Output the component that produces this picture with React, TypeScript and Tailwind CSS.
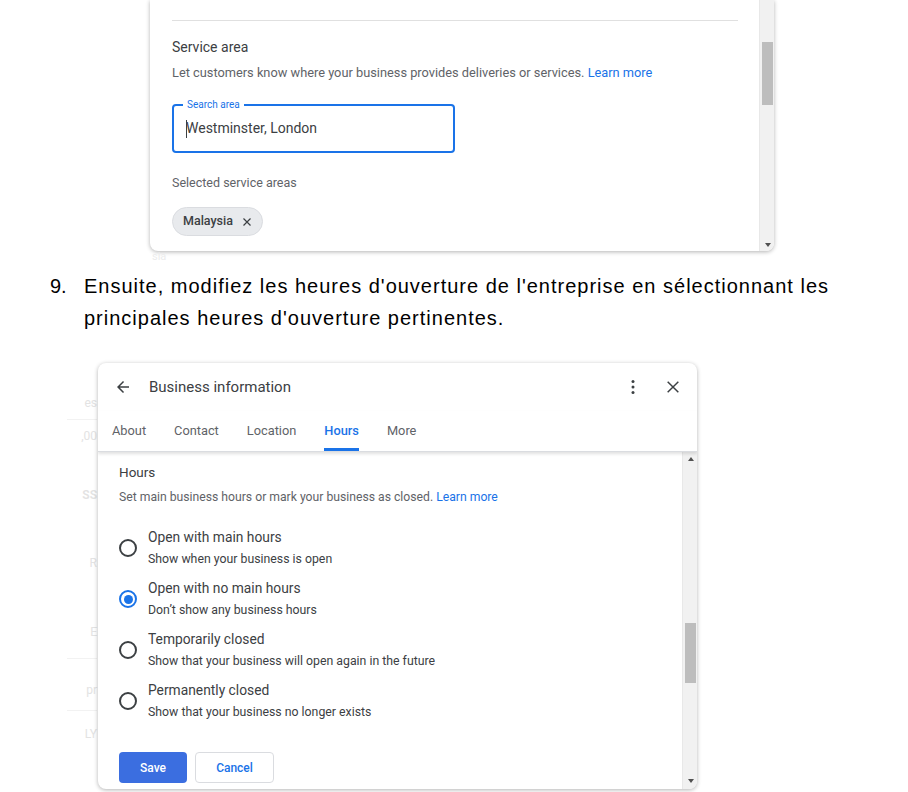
import React from "react";

const roboto = { fontFamily: "Roboto, 'Liberation Sans', sans-serif" };

type RadioOption = {
  title: string;
  subtitle: string;
  checked?: boolean;
};

const options: RadioOption[] = [
  { title: "Open with main hours", subtitle: "Show when your business is open" },
  { title: "Open with no main hours", subtitle: "Don’t show any business hours", checked: true },
  { title: "Temporarily closed", subtitle: "Show that your business will open again in the future" },
  { title: "Permanently closed", subtitle: "Show that your business no longer exists" },
];

const tabs = ["About", "Contact", "Location", "Hours", "More"];

const Scrollbar = ({ thumbTop, thumbHeight }: { thumbTop: number; thumbHeight: number }) => (
  <div className="relative w-[15px] shrink-0 bg-[#f1f1f1] border-l border-[#e8e8e8]">
    <div className="absolute left-[2px] right-[1px] bg-[#bdbdbd]" style={{ top: thumbTop, height: thumbHeight }} />
    <div className="absolute bottom-[4px] left-[5px] w-0 h-0 border-l-[3px] border-r-[3px] border-t-[4px] border-l-transparent border-r-transparent border-t-[#505050]" />
  </div>
);

const Radio = ({ checked }: { checked?: boolean }) =>
  checked ? (
    <div className="w-[18px] h-[18px] rounded-full border-2 border-[#1a73e8] flex items-center justify-center">
      <div className="w-[9px] h-[9px] rounded-full bg-[#1a73e8]" />
    </div>
  ) : (
    <div className="w-[18px] h-[18px] rounded-full border-2 border-[#3c4043]" />
  );

export default function App() {
  return (
    <div className="w-[908px] h-[792px] bg-white overflow-hidden relative">
      {/* first screenshot: service area */}
      <div className="ml-[150px] w-[624px] h-[251px] flex bg-white rounded-b-[8px] shadow-[0_1px_4px_rgba(0,0,0,0.3)] overflow-hidden" style={roboto}>
        <div className="flex-1 pl-[22px] pr-[21px]">
          <div className="h-[21px] border-b border-[#e0e0e0]" />
          <div className="mt-[16px] text-[14px] leading-[20px] text-[#3c4043]">Service area</div>
          <div className="mt-[6px] text-[12.8px] leading-[20px] text-[#5f6368]">
            Let customers know where your business provides deliveries or services.{" "}
            <span className="text-[#1a73e8]">Learn more</span>
          </div>
          <div className="relative mt-[21px] w-[283px] h-[49px] rounded-[4px] border-2 border-[#1a73e8] flex items-center pl-[12px]">
            <span className="absolute -top-[8px] left-[9px] bg-white px-[4px] text-[10px] leading-[14px] text-[#1a73e8]">Search area</span>
            <span className="w-px h-[18px] bg-[#3c4043]" />
            <span className="text-[14px] text-[#3c4043] -ml-px">Westminster, London</span>
          </div>
          <div className="mt-[20px] text-[12.5px] leading-[20px] text-[#5f6368]">Selected service areas</div>
          <div className="mt-[14px] inline-flex items-center h-[29px] w-[91px] rounded-full bg-[#e8eaed] border border-[#dadce0] pl-[10px] gap-[8px]">
            <span className="text-[12.5px] font-medium text-[#3c4043]">Malaysia</span>
            <svg width="12" height="12" viewBox="0 0 24 24" fill="none" stroke="#3c4043" strokeWidth="2.4">
              <path d="M5 5l14 14M19 5L5 19" />
            </svg>
          </div>
        </div>
        <Scrollbar thumbTop={42} thumbHeight={63} />
      </div>
      <div className="ml-[152px] text-[11px] leading-[12px] text-[#ececec]" style={roboto}>sia</div>

      {/* instruction */}
      <ol className="mt-[7px] text-[20px] leading-[32px] text-black" style={{ fontFamily: "'Liberation Sans', Arial, sans-serif" }}>
        <li className="flex">
          <span className="w-[84px] pl-[50px] shrink-0">9.</span>
          <span className="w-[800px] tracking-[1px]">
            Ensuite, modifiez les heures d'ouverture de l'entreprise en sélectionnant les principales heures d'ouverture pertinentes.
          </span>
        </li>
      </ol>

      {/* second screenshot: hours */}
      <div className="mt-[29px] flex">
        <div className="w-[98px] shrink-0 flex flex-col items-end pr-[1px] text-[12px] text-[#e3e3e3] overflow-hidden" style={roboto}>
          <div className="h-[30px]" />
          <div className="h-[20px] leading-[20px]">es</div>
          <div className="w-[30px] border-b border-[#f2f2f2] mt-[6px]" />
          <div className="h-[20px] leading-[20px] mt-[6px]">,00</div>
          <div className="h-[20px] leading-[20px] mt-[39px] font-semibold">SS</div>
          <div className="h-[20px] leading-[20px] mt-[48px]">R</div>
          <div className="h-[20px] leading-[20px] mt-[49px]">E</div>
          <div className="w-[30px] border-b border-[#f2f2f2] mt-[16px]" />
          <div className="h-[20px] leading-[20px] mt-[21px]">pr</div>
          <div className="w-[30px] border-b border-[#f2f2f2] mt-[10px]" />
          <div className="h-[20px] leading-[20px] mt-[13px]">LY</div>
        </div>
        <div className="w-[599px] h-[426px] bg-white rounded-[8px] shadow-[0_1px_4px_rgba(0,0,0,0.3)] flex flex-col overflow-hidden" style={roboto}>
          <div className="h-[48px] flex items-center pl-[16px] pr-[16px]">
            <svg width="18" height="18" viewBox="0 0 24 24" fill="#3c4043">
              <path d="M20 11H7.83l5.59-5.59L12 4l-8 8 8 8 1.41-1.41L7.83 13H20v-2z" />
            </svg>
            <span className="ml-[17px] text-[15px] text-[#3c4043] flex-1">Business information</span>
            <svg width="20" height="20" viewBox="0 0 24 24" fill="#3c4043" className="mr-[22px]">
              <circle cx="12" cy="5.5" r="1.8" />
              <circle cx="12" cy="12" r="1.8" />
              <circle cx="12" cy="18.5" r="1.8" />
            </svg>
            <svg width="16" height="16" viewBox="0 0 24 24" fill="none" stroke="#3c4043" strokeWidth="2.2">
              <path d="M4 4l16 16M20 4L4 20" />
            </svg>
          </div>
          <div className="h-[41px] flex pl-[14px] gap-[28px] border-b border-[#dadce0] shadow-[0_2px_3px_rgba(0,0,0,0.12)] relative z-10">
            {tabs.map((t) => (
              <div
                key={t}
                className={`h-full flex items-center pt-[3px] text-[12.8px] border-b-[3px] ${
                  t === "Hours" ? "text-[#1a73e8] font-medium border-[#1a73e8]" : "text-[#5f6368] border-transparent"
                }`}
              >
                {t}
              </div>
            ))}
          </div>
          <div className="flex-1 flex min-h-0">
            <div className="flex-1 pl-[21px]">
              <div className="mt-[10px] text-[13.5px] leading-[20px] text-[#3c4043]">Hours</div>
              <div className="mt-[5px] text-[12.2px] leading-[20px] text-[#5f6368]">
                Set main business hours or mark your business as closed.{" "}
                <span className="text-[#1a73e8]">Learn more</span>
              </div>
              <div className="mt-[20px] flex flex-col gap-[9px]">
                {options.map((o) => (
                  <div key={o.title} className="flex items-center">
                    <div className="w-[29px]">
                      <Radio checked={o.checked} />
                    </div>
                    <div>
                      <div className="text-[13.8px] leading-[20px] text-[#3c4043]">{o.title}</div>
                      <div className="mt-[2px] text-[12.3px] leading-[20px] text-[#3c4043]">{o.subtitle}</div>
                    </div>
                  </div>
                ))}
              </div>
              <div className="mt-[30px] flex gap-[8px]">
                <button className="w-[68px] h-[31px] rounded-[4px] bg-[#3b6ee0] text-white text-[12px] font-medium">Save</button>
                <button className="w-[79px] h-[31px] rounded-[4px] border border-[#dadce0] text-[#1a73e8] text-[12px] font-medium">Cancel</button>
              </div>
            </div>
            <div className="relative w-[15px] shrink-0 bg-[#f1f1f1] border-l border-[#e8e8e8]">
              <div className="absolute top-[5px] left-[5px] w-0 h-0 border-l-[3px] border-r-[3px] border-b-[4px] border-l-transparent border-r-transparent border-b-[#505050]" />
              <div className="absolute top-[171px] h-[60px] left-[2px] right-[1px] bg-[#bdbdbd]" />
              <div className="absolute bottom-[6px] left-[5px] w-0 h-0 border-l-[3px] border-r-[3px] border-t-[4px] border-l-transparent border-r-transparent border-t-[#505050]" />
            </div>
          </div>
        </div>
      </div>
    </div>
  );
}
